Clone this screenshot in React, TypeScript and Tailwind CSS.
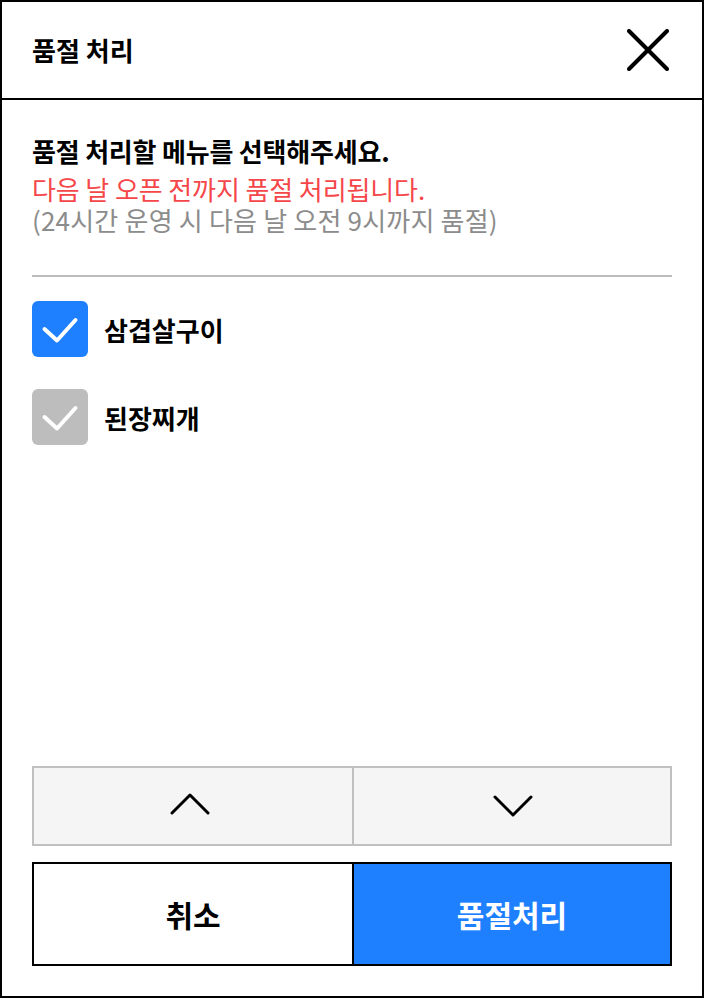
import React from "react";

const font = { fontFamily: '"Noto Sans CJK KR", "Noto Sans", sans-serif' };

function Check({ checked }: { checked: boolean }) {
  return (
    <div
      className={`w-[56px] h-[56px] rounded-[6px] flex items-center justify-center ${
        checked ? "bg-[#1e7fff]" : "bg-[#bdbdbd]"
      }`}
    >
      <svg width="56" height="56" viewBox="0 0 56 56" fill="none">
        <polyline
          points="12.5,28 25,39.5 43.5,19"
          stroke="white"
          strokeWidth="4"
          strokeLinecap="round"
          strokeLinejoin="round"
        />
      </svg>
    </div>
  );
}

export default function App() {
  return (
    <div
      className="w-[704px] h-[998px] border-2 border-black bg-white flex flex-col text-black"
      style={font}
    >
      <div className="h-[98px] shrink-0 border-b-2 border-black flex items-center justify-between pl-[30px] pr-[33px]">
        <span className="text-[26px] font-bold leading-none">품절 처리</span>
        <svg width="42" height="42" viewBox="0 0 42 42" fill="none">
          <line x1="2" y1="2" x2="40" y2="40" stroke="black" strokeWidth="4" strokeLinecap="round" />
          <line x1="40" y1="2" x2="2" y2="40" stroke="black" strokeWidth="4" strokeLinecap="round" />
        </svg>
      </div>

      <div className="flex-1 flex flex-col px-[30px] pb-[30px]">
        <div className="pt-[34px]">
          <p className="text-[26px] font-bold leading-[34px] tracking-[-0.2px]">
            품절 처리할 메뉴를 선택해주세요.
          </p>
          <p className="mt-[5px] text-[26px] leading-[32px] text-[#f5474a] tracking-[-0.1px]">
            다음 날 오픈 전까지 품절 처리됩니다.
          </p>
          <p className="text-[26px] leading-[30px] text-[#8c8c8c] tracking-[0.2px]">
            (24시간 운영 시 다음 날 오전 9시까지 품절)
          </p>
        </div>

        <div className="mt-[40px] h-[2px] bg-[#bdbdbd]" />

        <div className="mt-[24px] flex flex-col gap-[32px]">
          <div className="flex items-center gap-[16px]">
            <Check checked />
            <span className="text-[26px] font-bold">삼겹살구이</span>
          </div>
          <div className="flex items-center gap-[16px]">
            <Check checked={false} />
            <span className="text-[26px] font-bold">된장찌개</span>
          </div>
        </div>

        <div className="flex-1" />

        <div className="h-[80px] grid grid-cols-[320px_1fr] border-2 border-[#c0c0c0] bg-[#f5f5f5]">
          <button className="flex items-center justify-center border-r-2 border-[#c0c0c0] pr-[6px] pb-[4px]">
            <svg width="40" height="22" viewBox="0 0 40 22" fill="none">
              <polyline points="2,20 20,2 38,20" stroke="black" strokeWidth="3" strokeLinecap="round" strokeLinejoin="round" />
            </svg>
          </button>
          <button className="flex items-center justify-center pl-[2px]">
            <svg width="40" height="22" viewBox="0 0 40 22" fill="none">
              <polyline points="2,2 20,20 38,2" stroke="black" strokeWidth="3" strokeLinecap="round" strokeLinejoin="round" />
            </svg>
          </button>
        </div>

        <div className="mt-[16px] h-[104px] grid grid-cols-[320px_1fr] border-2 border-black">
          <button className="flex items-center justify-center bg-white border-r-2 border-black text-[30px] font-bold">
            취소
          </button>
          <button className="flex items-center justify-center bg-[#1e7fff] text-white text-[30px] font-bold">
            품절처리
          </button>
        </div>
      </div>
    </div>
  );
}
